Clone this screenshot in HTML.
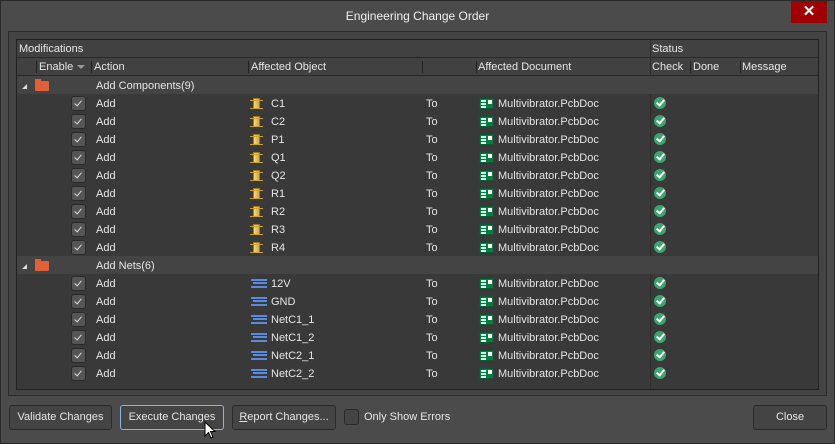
<!DOCTYPE html>
<html><head><style>
*{margin:0;padding:0;box-sizing:border-box}
body{width:835px;height:444px;background:#4a4a4a;font-family:"Liberation Sans",sans-serif;font-size:11px;color:#e6e6e6;position:relative;overflow:hidden}
.win{position:absolute;left:0;top:0;width:835px;height:444px;border:1px solid #2a2a2a;background:#4b4b4b}
.title{position:absolute;left:0;top:9px;width:835px;text-align:center;font-size:12px;color:#f0f0f0}
.x{position:absolute;left:791px;top:1px;width:36px;height:22px;background:#a00000;color:#fff;text-align:center;font-size:15px;font-weight:bold;line-height:22px}
.panel{position:absolute;left:8px;top:31px;width:819px;height:365px;border:1px solid #2c2c2c;background:#444}
.grid{position:absolute;left:16px;top:39px;width:803px;height:351px;border:1px solid #222;background:#393939}
.hdr{position:absolute;left:0;width:801px;height:18px;background:#414141;border-bottom:1px solid #2a2a2a}
.hdr span{position:absolute;top:3px;color:#e6e6e6}
.sep{position:absolute;top:3px;width:1px;height:12px;background:#222}
.row{position:absolute;left:0;width:801px;height:18px}
.row span{position:absolute;top:4px}
.grp{background:#444}
.cb{position:absolute;left:54px;top:2px;width:15px;height:15px;border:1px solid #2a2a2a;border-radius:3px;background:#555}
.cb:after{content:"";position:absolute;left:4px;top:2px;width:3px;height:6px;border-right:1px solid #ddd;border-bottom:1px solid #ddd;transform:rotate(40deg)}
.ok{position:absolute;left:637px;top:3px;width:12px;height:12px;border-radius:50%;background:#3fa56f}
.ok:after{content:"";position:absolute;left:4px;top:1px;width:3px;height:6px;border-right:2px solid #fff;border-bottom:2px solid #fff;transform:rotate(40deg)}
.chip{position:absolute;left:236px;top:4px;width:7px;height:11px;background:linear-gradient(90deg,#f7d780,#d9a83a);border:1px solid #a07a20}
.chip:before{content:"";position:absolute;left:-4px;top:1px;width:13px;height:7px;border-top:1px solid #c9a030;border-bottom:1px solid #c9a030}
.pcb{position:absolute;left:462px;top:4px;width:15px;height:11px;background:#0d7a40;border:1px solid #0a5a30;overflow:hidden}
.pcb:after{content:"";position:absolute;left:8px;top:1px;width:4px;height:4px;background:#fff}
.pcb:before{content:"";position:absolute;left:1px;top:1px;width:5px;height:2px;background:#cfe;box-shadow:0 3px 0 #cfe,0 6px 0 #cfe}
.net{position:absolute;left:234px;top:5px;width:16px;height:9px;border-top:2px solid #5a8ad8;border-bottom:2px solid #5a8ad8}
.net:after{content:"";position:absolute;left:2px;top:1px;width:14px;height:2px;background:#5a8ad8}
.fold{position:absolute;left:18px;top:5px;width:14px;height:10px;background:#e0603a;border-radius:1px}
.fold:before{content:"";position:absolute;left:0;top:-2px;width:6px;height:3px;background:#e0603a}
.tri{position:absolute;left:5px;top:8px;width:0;height:0;border-left:5px solid transparent;border-bottom:5px solid #ddd}
.vl{position:absolute;top:0;width:1px;height:351px;background:#2e2e2e;left:633px}
.btn{position:absolute;top:405px;height:25px;border:1px solid #2a2a2a;border-radius:3px;background:#444;text-align:center;line-height:23px;font-size:11px;color:#e6e6e6}
</style></head><body>
<div class="win"></div>
<div class="title">Engineering Change Order</div>
<div class="x">✕</div>
<div class="panel"></div>
<div class="grid">
<div class="hdr" style="top:0"><span style="left:2px">Modifications</span><div class="sep" style="left:633px"></div><span style="left:635px">Status</span></div>
<div class="hdr" style="top:18px"><div class="sep" style="left:19px"></div><span style="left:22px">Enable</span><span style="left:60px;top:7px;border-left:4px solid transparent;border-right:4px solid transparent;border-top:4px solid #999;width:0;height:0"></span><div class="sep" style="left:74px"></div><span style="left:77px">Action</span><div class="sep" style="left:231px"></div><span style="left:234px">Affected Object</span><div class="sep" style="left:405px"></div><div class="sep" style="left:459px"></div><span style="left:461px">Affected Document</span><div class="sep" style="left:633px"></div><span style="left:635px">Check</span><div class="sep" style="left:673px"></div><span style="left:676px">Done</span><div class="sep" style="left:723px"></div><span style="left:725px">Message</span></div>
<div class="vl"></div>
<div class="row grp" style="top:36px"><div class="tri"></div><div class="fold"></div><span style="left:79px">Add Components(9)</span></div>
<div class="row" style="top:54px"><div class="cb"></div><span style="left:79px">Add</span><div class="chip"></div><span style="left:254px">C1</span><span style="left:409px">To</span><div class="pcb"></div><span style="left:481px">Multivibrator.PcbDoc</span><div class="ok"></div></div>
<div class="row" style="top:72px"><div class="cb"></div><span style="left:79px">Add</span><div class="chip"></div><span style="left:254px">C2</span><span style="left:409px">To</span><div class="pcb"></div><span style="left:481px">Multivibrator.PcbDoc</span><div class="ok"></div></div>
<div class="row" style="top:90px"><div class="cb"></div><span style="left:79px">Add</span><div class="chip"></div><span style="left:254px">P1</span><span style="left:409px">To</span><div class="pcb"></div><span style="left:481px">Multivibrator.PcbDoc</span><div class="ok"></div></div>
<div class="row" style="top:108px"><div class="cb"></div><span style="left:79px">Add</span><div class="chip"></div><span style="left:254px">Q1</span><span style="left:409px">To</span><div class="pcb"></div><span style="left:481px">Multivibrator.PcbDoc</span><div class="ok"></div></div>
<div class="row" style="top:126px"><div class="cb"></div><span style="left:79px">Add</span><div class="chip"></div><span style="left:254px">Q2</span><span style="left:409px">To</span><div class="pcb"></div><span style="left:481px">Multivibrator.PcbDoc</span><div class="ok"></div></div>
<div class="row" style="top:144px"><div class="cb"></div><span style="left:79px">Add</span><div class="chip"></div><span style="left:254px">R1</span><span style="left:409px">To</span><div class="pcb"></div><span style="left:481px">Multivibrator.PcbDoc</span><div class="ok"></div></div>
<div class="row" style="top:162px"><div class="cb"></div><span style="left:79px">Add</span><div class="chip"></div><span style="left:254px">R2</span><span style="left:409px">To</span><div class="pcb"></div><span style="left:481px">Multivibrator.PcbDoc</span><div class="ok"></div></div>
<div class="row" style="top:180px"><div class="cb"></div><span style="left:79px">Add</span><div class="chip"></div><span style="left:254px">R3</span><span style="left:409px">To</span><div class="pcb"></div><span style="left:481px">Multivibrator.PcbDoc</span><div class="ok"></div></div>
<div class="row" style="top:198px"><div class="cb"></div><span style="left:79px">Add</span><div class="chip"></div><span style="left:254px">R4</span><span style="left:409px">To</span><div class="pcb"></div><span style="left:481px">Multivibrator.PcbDoc</span><div class="ok"></div></div>
<div class="row grp" style="top:216px"><div class="tri"></div><div class="fold"></div><span style="left:79px">Add Nets(6)</span></div>
<div class="row" style="top:234px"><div class="cb"></div><span style="left:79px">Add</span><div class="net"></div><span style="left:254px">12V</span><span style="left:409px">To</span><div class="pcb"></div><span style="left:481px">Multivibrator.PcbDoc</span><div class="ok"></div></div>
<div class="row" style="top:252px"><div class="cb"></div><span style="left:79px">Add</span><div class="net"></div><span style="left:254px">GND</span><span style="left:409px">To</span><div class="pcb"></div><span style="left:481px">Multivibrator.PcbDoc</span><div class="ok"></div></div>
<div class="row" style="top:270px"><div class="cb"></div><span style="left:79px">Add</span><div class="net"></div><span style="left:254px">NetC1_1</span><span style="left:409px">To</span><div class="pcb"></div><span style="left:481px">Multivibrator.PcbDoc</span><div class="ok"></div></div>
<div class="row" style="top:288px"><div class="cb"></div><span style="left:79px">Add</span><div class="net"></div><span style="left:254px">NetC1_2</span><span style="left:409px">To</span><div class="pcb"></div><span style="left:481px">Multivibrator.PcbDoc</span><div class="ok"></div></div>
<div class="row" style="top:306px"><div class="cb"></div><span style="left:79px">Add</span><div class="net"></div><span style="left:254px">NetC2_1</span><span style="left:409px">To</span><div class="pcb"></div><span style="left:481px">Multivibrator.PcbDoc</span><div class="ok"></div></div>
<div class="row" style="top:324px"><div class="cb"></div><span style="left:79px">Add</span><div class="net"></div><span style="left:254px">NetC2_2</span><span style="left:409px">To</span><div class="pcb"></div><span style="left:481px">Multivibrator.PcbDoc</span><div class="ok"></div></div>
</div>
<div class="btn" style="left:9px;width:103px">Validate Changes</div>
<div class="btn" style="left:120px;width:104px;border-color:#8ab4e0">Execute Changes</div>
<div class="btn" style="left:232px;width:104px"><u>R</u>eport Changes...</div>
<div style="position:absolute;left:344px;top:409px;width:15px;height:16px;border:1px solid #2a2a2a;border-radius:3px;background:#444"></div>
<div style="position:absolute;left:364px;top:411px;font-size:11px">Only Show Errors</div>
<div class="btn" style="left:753px;width:74px">Close</div>
<svg style="position:absolute;left:204px;top:421px" width="14" height="20" viewBox="0 0 14 20"><path d="M1 1 L1 15 L4.5 11.5 L7 17 L9 16 L6.5 10.5 L11 10.5 Z" fill="#fff" stroke="#000" stroke-width="1"/></svg>
</body></html>
